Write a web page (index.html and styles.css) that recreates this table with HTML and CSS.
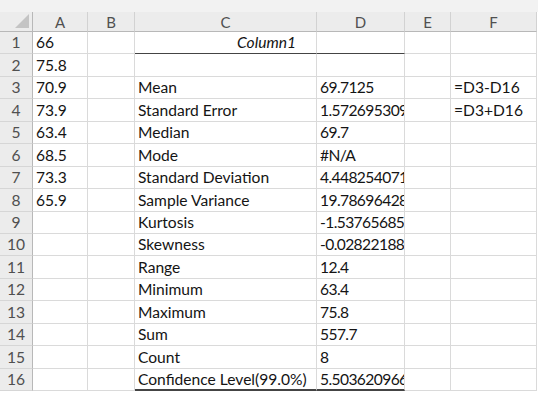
FILE: index.html
```html
<!DOCTYPE html>
<html>
<head>
<meta charset="utf-8">
<link rel="stylesheet" href="styles.css">
</head>
<body>
<div class="topstrip"></div>
<div class="sheet">
  <div class="hd corner"><span class="tri"></span></div>
  <div class="hd col">A</div>
  <div class="hd col">B</div>
  <div class="hd col">C</div>
  <div class="hd col">D</div>
  <div class="hd col">E</div>
  <div class="hd col">F</div>

  <div class="hd rn">1</div><div class="c">66</div><div class="c"></div><div class="c title ul"><i>Column1</i></div><div class="c ul"></div><div class="c"></div><div class="c"></div>
  <div class="hd rn">2</div><div class="c">75.8</div><div class="c"></div><div class="c"></div><div class="c"></div><div class="c"></div><div class="c"></div>
  <div class="hd rn">3</div><div class="c">70.9</div><div class="c"></div><div class="c">Mean</div><div class="c n">69.7125</div><div class="c"></div><div class="c">=D3-D16</div>
  <div class="hd rn">4</div><div class="c">73.9</div><div class="c"></div><div class="c">Standard Error</div><div class="c n">1.572695309</div><div class="c"></div><div class="c">=D3+D16</div>
  <div class="hd rn">5</div><div class="c">63.4</div><div class="c"></div><div class="c">Median</div><div class="c n">69.7</div><div class="c"></div><div class="c"></div>
  <div class="hd rn">6</div><div class="c">68.5</div><div class="c"></div><div class="c">Mode</div><div class="c n">#N/A</div><div class="c"></div><div class="c"></div>
  <div class="hd rn">7</div><div class="c">73.3</div><div class="c"></div><div class="c">Standard Deviation</div><div class="c n">4.448254071</div><div class="c"></div><div class="c"></div>
  <div class="hd rn">8</div><div class="c">65.9</div><div class="c"></div><div class="c">Sample Variance</div><div class="c n">19.78696428</div><div class="c"></div><div class="c"></div>
  <div class="hd rn">9</div><div class="c"></div><div class="c"></div><div class="c">Kurtosis</div><div class="c n">-1.537656853</div><div class="c"></div><div class="c"></div>
  <div class="hd rn">10</div><div class="c"></div><div class="c"></div><div class="c">Skewness</div><div class="c n">-0.028221885</div><div class="c"></div><div class="c"></div>
  <div class="hd rn">11</div><div class="c"></div><div class="c"></div><div class="c">Range</div><div class="c n">12.4</div><div class="c"></div><div class="c"></div>
  <div class="hd rn">12</div><div class="c"></div><div class="c"></div><div class="c">Minimum</div><div class="c n">63.4</div><div class="c"></div><div class="c"></div>
  <div class="hd rn">13</div><div class="c"></div><div class="c"></div><div class="c">Maximum</div><div class="c n">75.8</div><div class="c"></div><div class="c"></div>
  <div class="hd rn">14</div><div class="c"></div><div class="c"></div><div class="c">Sum</div><div class="c n">557.7</div><div class="c"></div><div class="c"></div>
  <div class="hd rn">15</div><div class="c"></div><div class="c"></div><div class="c">Count</div><div class="c n">8</div><div class="c"></div><div class="c"></div>
  <div class="hd rn">16</div><div class="c"></div><div class="c"></div><div class="c thick">Confidence Level(99.0%)</div><div class="c thick n">5.503620966</div><div class="c"></div><div class="c"></div>
</div>
</body>
</html>
```
FILE: styles.css
```css
html, body {
  margin: 0;
  padding: 0;
  background: #ffffff;
}
body {
  width: 538px;
  height: 393px;
  overflow: hidden;
  font-family: Lato, "Liberation Sans", sans-serif;
  color: #141414;
}
.topstrip {
  height: 12px;
  background: #f2f2f2;
}
.sheet {
  display: grid;
  grid-template-columns: 33px 55px 47px 182px 88px 46px 86px;
  grid-template-rows: 20px repeat(16, 22.44px);
}
.sheet > div {
  box-sizing: border-box;
  border-right: 1px solid #dadada;
  border-bottom: 1px solid #dadada;
  overflow: hidden;
  white-space: nowrap;
  display: flex;
  align-items: flex-end;
  padding: 0 2px 2px 3px;
  font-size: 15.6px;
  line-height: 18px;
}
.sheet > .n {
  letter-spacing: -0.6px;
  padding-right: 0;
}
.hd {
  background: #ececec;
  color: #505050;
}
.sheet > .col {
  justify-content: center;
  align-items: center;
  padding: 0;
  border-right: 1px solid #d2d2d2;
  border-bottom: 1px solid #b8b8b8;
  font-size: 15px;
}
.sheet > .rn {
  justify-content: center;
  padding: 0 0 2px 0;
  border-right: 1px solid #b8b8b8;
  border-bottom: 1px solid #d6d6d6;
}
.sheet > .corner {
  border-right: 1px solid #b8b8b8;
  border-bottom: 1px solid #b8b8b8;
  position: relative;
  padding: 0;
}
.tri {
  position: absolute;
  right: 3px;
  bottom: 3px;
  width: 0;
  height: 0;
  border-left: 14px solid transparent;
  border-bottom: 14px solid #c4c4c4;
}
.sheet > .title {
  justify-content: flex-end;
  padding-right: 20px;
}
.sheet > .ul {
  border-bottom: 1px solid #444;
}
.sheet > .thick {
  border-bottom: 2px solid #444;
  padding-bottom: 1px;
}
```
